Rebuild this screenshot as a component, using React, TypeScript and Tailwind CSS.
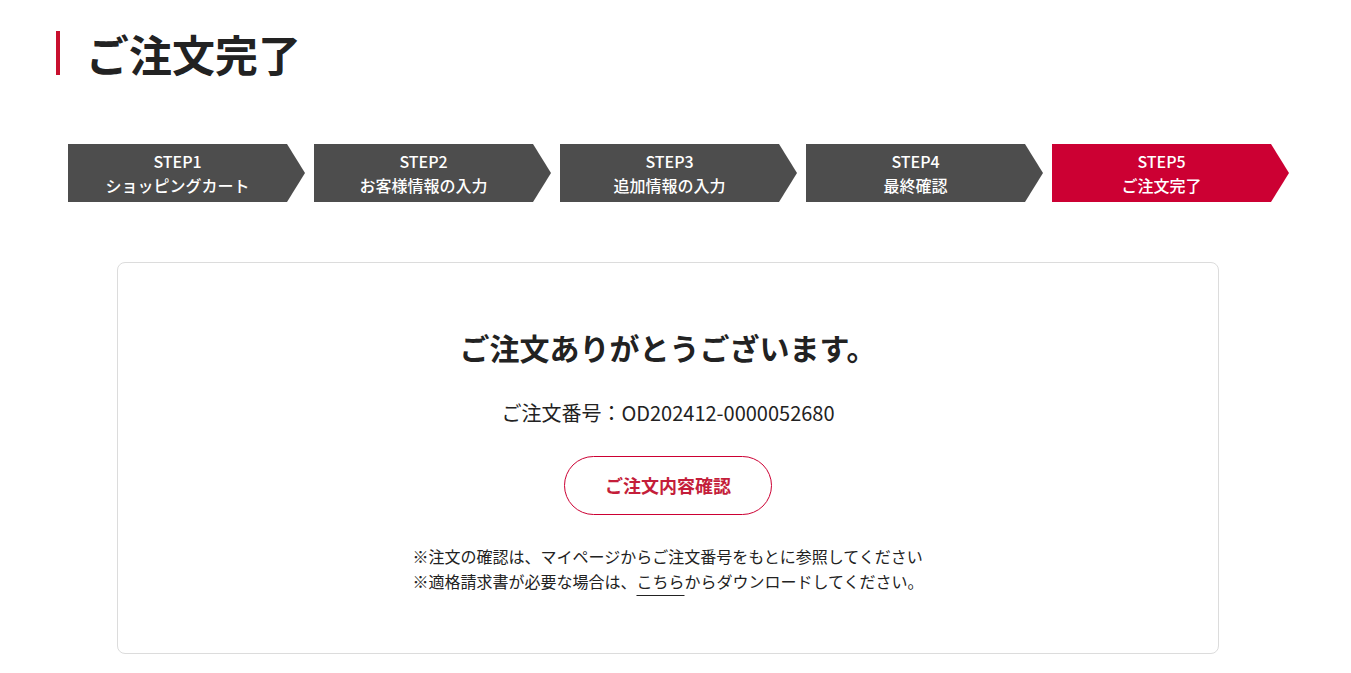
const steps = [
  { no: 'STEP1', label: 'ショッピングカート' },
  { no: 'STEP2', label: 'お客様情報の入力' },
  { no: 'STEP3', label: '追加情報の入力' },
  { no: 'STEP4', label: '最終確認' },
  { no: 'STEP5', label: 'ご注文完了', active: true },
];

export default function App() {
  return (
    <div
      className="min-h-screen bg-white text-[#222]"
      style={{ fontFamily: '"Noto Sans CJK JP", "Noto Sans", sans-serif' }}
    >
      {/* Page title */}
      <div className="pt-[31px] pl-[56px]">
        <h1 className="flex items-center border-l-4 border-[#c8102e] pl-[26px] h-[44px] text-[43px] font-bold leading-none">
          ご注文完了
        </h1>
      </div>

      {/* Steps */}
      <ol className="mt-[69px] ml-[68px] flex gap-[9px]">
        {steps.map((s) => (
          <li
            key={s.no}
            className={
              'w-[237px] h-[58px] pr-[18px] flex flex-col items-center justify-center text-white text-[16px] leading-[24px] [clip-path:polygon(0_0,calc(100%-18px)_0,100%_50%,calc(100%-18px)_100%,0_100%)] ' +
              (s.active ? 'bg-[#cc0033]' : 'bg-[#4d4d4d]')
            }
          >
            <span className="font-medium">{s.no}</span>
            <span className="font-medium">{s.label}</span>
          </li>
        ))}
      </ol>

      {/* Completion card */}
      <div className="mt-[60px] ml-[117px] w-[1102px] h-[392px] border border-[#dcdcdc] rounded-[8px] flex flex-col items-center pt-[64px]">
        <h2 className="text-[30px] font-bold leading-[40px]">ご注文ありがとうございます。</h2>
        <p className="mt-[32px] text-[20px] leading-[28px]">ご注文番号：OD202412-0000052680</p>
        <a
          href="#"
          className="mt-[29px] w-[208px] h-[59px] rounded-full border border-[#cc0033] flex items-center justify-center text-[#c41e3a] text-[18px] font-bold"
        >
          ご注文内容確認
        </a>
        <div className="mt-[29px] text-[16px] leading-[25px] text-[#222]">
          <p>※注文の確認は、マイページからご注文番号をもとに参照してください</p>
          <p>
            ※適格請求書が必要な場合は、
            <a href="#" className="underline underline-offset-[7px] decoration-[#222]">
              こちら
            </a>
            からダウンロードしてください。
          </p>
        </div>
      </div>
    </div>
  );
}
